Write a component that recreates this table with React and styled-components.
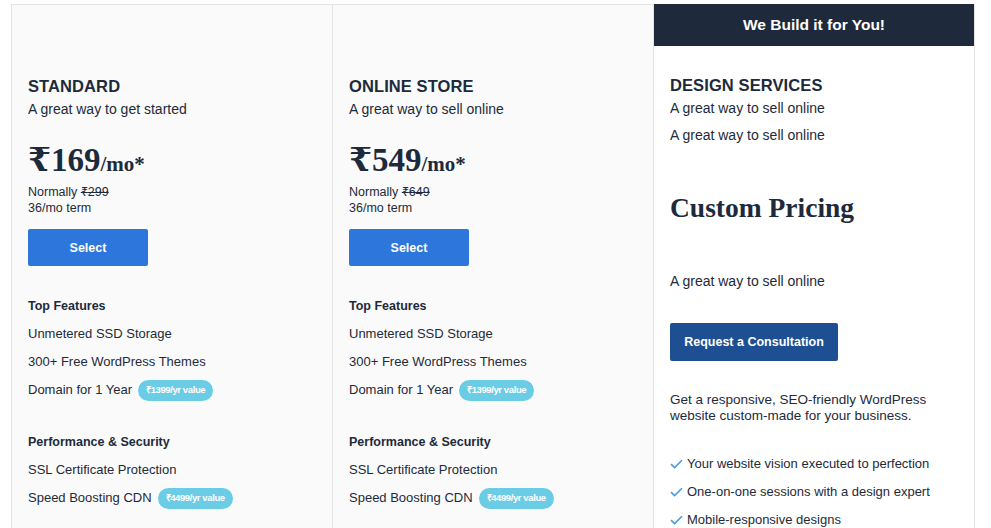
import React from "react";
import styled, { createGlobalStyle } from "styled-components";

const GlobalStyle = createGlobalStyle`
  body {
    margin: 0;
    background: #fff;
    font-family: "Liberation Sans", Arial, sans-serif;
    color: #1d2a3b;
  }
`;

const Page = styled.div`
  padding: 4px 0 0 11px;
  height: 524px;
  overflow: hidden;
`;

const Grid = styled.div`
  display: grid;
  grid-template-columns: repeat(3, 321px);
  border-left: 1px solid #e4e4e4;
  width: 963px;
`;

const Column = styled.div`
  background: ${(p) => (p.featured ? "#fff" : "#fafafa")};
  border-right: 1px solid #e4e4e4;
  border-top: ${(p) => (p.featured ? "none" : "1px solid #e4e4e4")};
  height: 560px;
  display: flex;
  flex-direction: column;
`;

const Banner = styled.div`
  height: 42px;
  background: #1e293b;
  color: #fff;
  font-size: 15.5px;
  font-weight: 700;
  display: flex;
  align-items: center;
  justify-content: center;
`;

const Body = styled.div`
  padding: ${(p) => p.top}px 16px 0;
  display: flex;
  flex-direction: column;
  align-items: flex-start;
`;

const Title = styled.h2`
  margin: 0;
  font-size: 16.5px;
  line-height: 20px;
  font-weight: 700;
  letter-spacing: 0.1px;
`;

const Sub = styled.p`
  margin: ${(p) => p.mt || 3}px 0 0;
  font-size: 14px;
  line-height: 20px;
`;

const Price = styled.div`
  margin-top: 23px;
  font-family: "Liberation Serif", "DejaVu Serif", serif;
  font-weight: 700;
  font-size: 33px;
  line-height: 36px;
  display: flex;
  align-items: baseline;
`;

const Per = styled.span`
  font-size: 21px;
`;

const Custom = styled.div`
  margin-top: 46px;
  font-family: "Liberation Serif", "DejaVu Serif", serif;
  font-weight: 700;
  font-size: 27.5px;
  line-height: 34px;
`;

const Small = styled.div`
  font-size: 12.5px;
  line-height: 16px;
  margin-top: ${(p) => p.mt || 0}px;
`;

const Strike = styled.s`
  text-decoration-thickness: 1px;
`;

const Button = styled.button`
  margin-top: ${(p) => p.mt}px;
  width: ${(p) => p.w}px;
  height: ${(p) => p.h}px;
  border: none;
  border-radius: 2px;
  background: ${(p) => p.bg};
  color: #fff;
  font-family: inherit;
  font-size: 12.5px;
  font-weight: 700;
  padding: 0;
`;

const Heading = styled.h3`
  margin: ${(p) => p.mt}px 0 0;
  font-size: 12.5px;
  line-height: 20px;
  font-weight: 700;
`;

const List = styled.ul`
  list-style: none;
  margin: ${(p) => p.mt}px 0 0;
  padding: 0;
`;

const Item = styled.li`
  font-size: 13px;
  line-height: 28px;
  display: flex;
  align-items: center;
`;

const Badge = styled.span`
  margin-left: 6px;
  background: #6bcce5;
  color: #fff;
  font-size: 9.5px;
  font-weight: 700;
  letter-spacing: -0.4px;
  height: 21px;
  padding: 0 8px;
  border-radius: 11px;
  display: inline-flex;
  align-items: center;
`;

const Para = styled.p`
  margin: 31px 0 0;
  font-size: 13.5px;
  line-height: 16px;
  max-width: 280px;
`;

const Check = styled.svg`
  width: 13px;
  height: 10px;
  margin-right: 4px;
  flex-shrink: 0;
`;

const CheckIcon = () => (
  <Check viewBox="0 0 13 10">
    <path d="M1 5.2 L4.6 8.6 L12 1.2" fill="none" stroke="#4a9be0" strokeWidth="1.6" />
  </Check>
);

const plans = [
  { name: "STANDARD", sub: "A great way to get started", price: "169", was: "299" },
  { name: "ONLINE STORE", sub: "A great way to sell online", price: "549", was: "649" },
];

const Plan = ({ plan }) => (
  <Column>
    <Body top={71}>
      <Title>{plan.name}</Title>
      <Sub>{plan.sub}</Sub>
      <Price>
        ₹{plan.price}
        <Per>/mo*</Per>
      </Price>
      <Small mt={2}>
        Normally <Strike>₹{plan.was}</Strike>
      </Small>
      <Small>36/mo term</Small>
      <Button mt={13} w={120} h={37} bg="#2d76db">Select</Button>
      <Heading mt={30}>Top Features</Heading>
      <List mt={4}>
        <Item>Unmetered SSD Storage</Item>
        <Item>300+ Free WordPress Themes</Item>
        <Item>
          Domain for 1 Year <Badge>₹1399/yr value</Badge>
        </Item>
      </List>
      <Heading mt={28}>Performance &amp; Security</Heading>
      <List mt={4}>
        <Item>SSL Certificate Protection</Item>
        <Item>
          Speed Boosting CDN <Badge>₹4499/yr value</Badge>
        </Item>
      </List>
    </Body>
  </Column>
);

export default function App() {
  return (
    <>
      <GlobalStyle />
      <Page>
        <Grid>
          {plans.map((p) => (
            <Plan key={p.name} plan={p} />
          ))}
          <Column featured>
            <Banner>We Build it for You!</Banner>
            <Body top={29}>
              <Title>DESIGN SERVICES</Title>
              <Sub>A great way to sell online</Sub>
              <Sub mt={7}>A great way to sell online</Sub>
              <Custom>Custom Pricing</Custom>
              <Sub mt={46}>A great way to sell online</Sub>
              <Button mt={32} w={168} h={38} bg="#1f4f93">Request a Consultation</Button>
              <Para>Get a responsive, SEO-friendly WordPress website custom-made for your business.</Para>
              <List mt={26}>
                <Item><CheckIcon />Your website vision executed to perfection</Item>
                <Item><CheckIcon />One-on-one sessions with a design expert</Item>
                <Item><CheckIcon />Mobile-responsive designs</Item>
              </List>
            </Body>
          </Column>
        </Grid>
      </Page>
    </>
  );
}
